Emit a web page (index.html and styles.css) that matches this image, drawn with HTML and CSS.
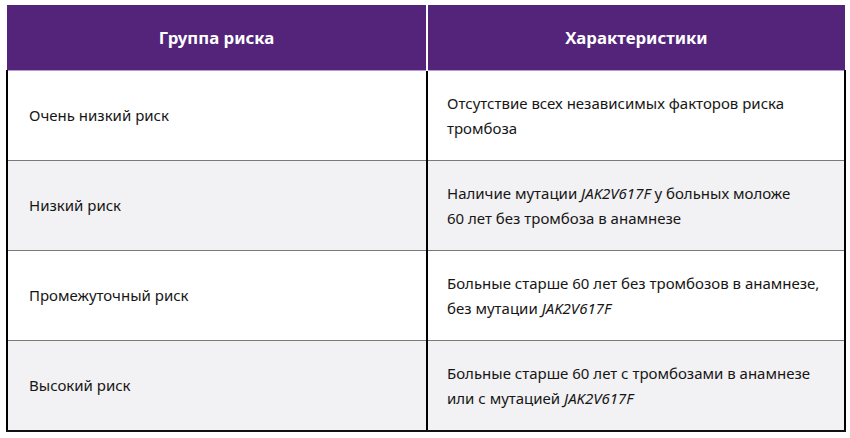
FILE: index.html
```html
<!DOCTYPE html>
<html lang="ru">
<head>
<meta charset="utf-8">
<link rel="stylesheet" href="styles.css">
</head>
<body>
<table class="risk">
  <thead>
    <tr>
      <th class="c1">Группа риска</th>
      <th class="c2">Характеристики</th>
    </tr>
  </thead>
  <tbody>
    <tr>
      <td class="c1">Очень низкий риск</td>
      <td class="c2">Отсутствие всех независимых факторов риска тромбоза</td>
    </tr>
    <tr class="alt">
      <td class="c1">Низкий риск</td>
      <td class="c2">Наличие мутации <i>JAK2V617F</i> у больных моложе 60&nbsp;лет без тромбоза в анамнезе</td>
    </tr>
    <tr>
      <td class="c1">Промежуточный риск</td>
      <td class="c2">Больные старше 60 лет без тромбозов в анамнезе, без мутации <i>JAK2V617F</i></td>
    </tr>
    <tr class="alt">
      <td class="c1">Высокий риск</td>
      <td class="c2">Больные старше 60 лет с тромбозами в анамнезе или с мутацией <i>JAK2V617F</i></td>
    </tr>
  </tbody>
</table>
</body>
</html>
```
FILE: styles.css
```css
html, body {
  margin: 0;
  padding: 0;
  background: #ffffff;
}
body {
  padding: 5px 0 0 6px;
  font-family: "Noto Sans", "Open Sans", sans-serif;
  color: #161616;
}
.risk {
  width: 840px;
  border-collapse: collapse;
  table-layout: fixed;
}
.risk th {
  background: #53247a;
  color: #ffffff;
  font-weight: 700;
  font-size: 16.8px;
  height: 65px;
  padding: 0;
  text-align: center;
  border-bottom: 1px solid #b89ad0;
}
.risk th.c1 {
  width: 419px;
  border-right: 2px solid #ffffff;
}
.risk td {
  height: 89px;
  padding: 0 20px 0 21px;
  font-size: 15px;
  line-height: 25px;
  vertical-align: middle;
  border-bottom: 1px solid #7a7a7a;
}
.risk td.c1 {
  border-left: 2px solid #000000;
  border-right: 2px solid #000000;
}
.risk td.c2 {
  border-right: 2px solid #000000;
  padding-left: 19px;
  padding-right: 18px;
}
.risk tr.alt td {
  background: #f2f1f3;
}
.risk tbody tr:last-child td {
  border-bottom: 2px solid #111111;
}
.risk i {
  font-style: italic;
}
```
